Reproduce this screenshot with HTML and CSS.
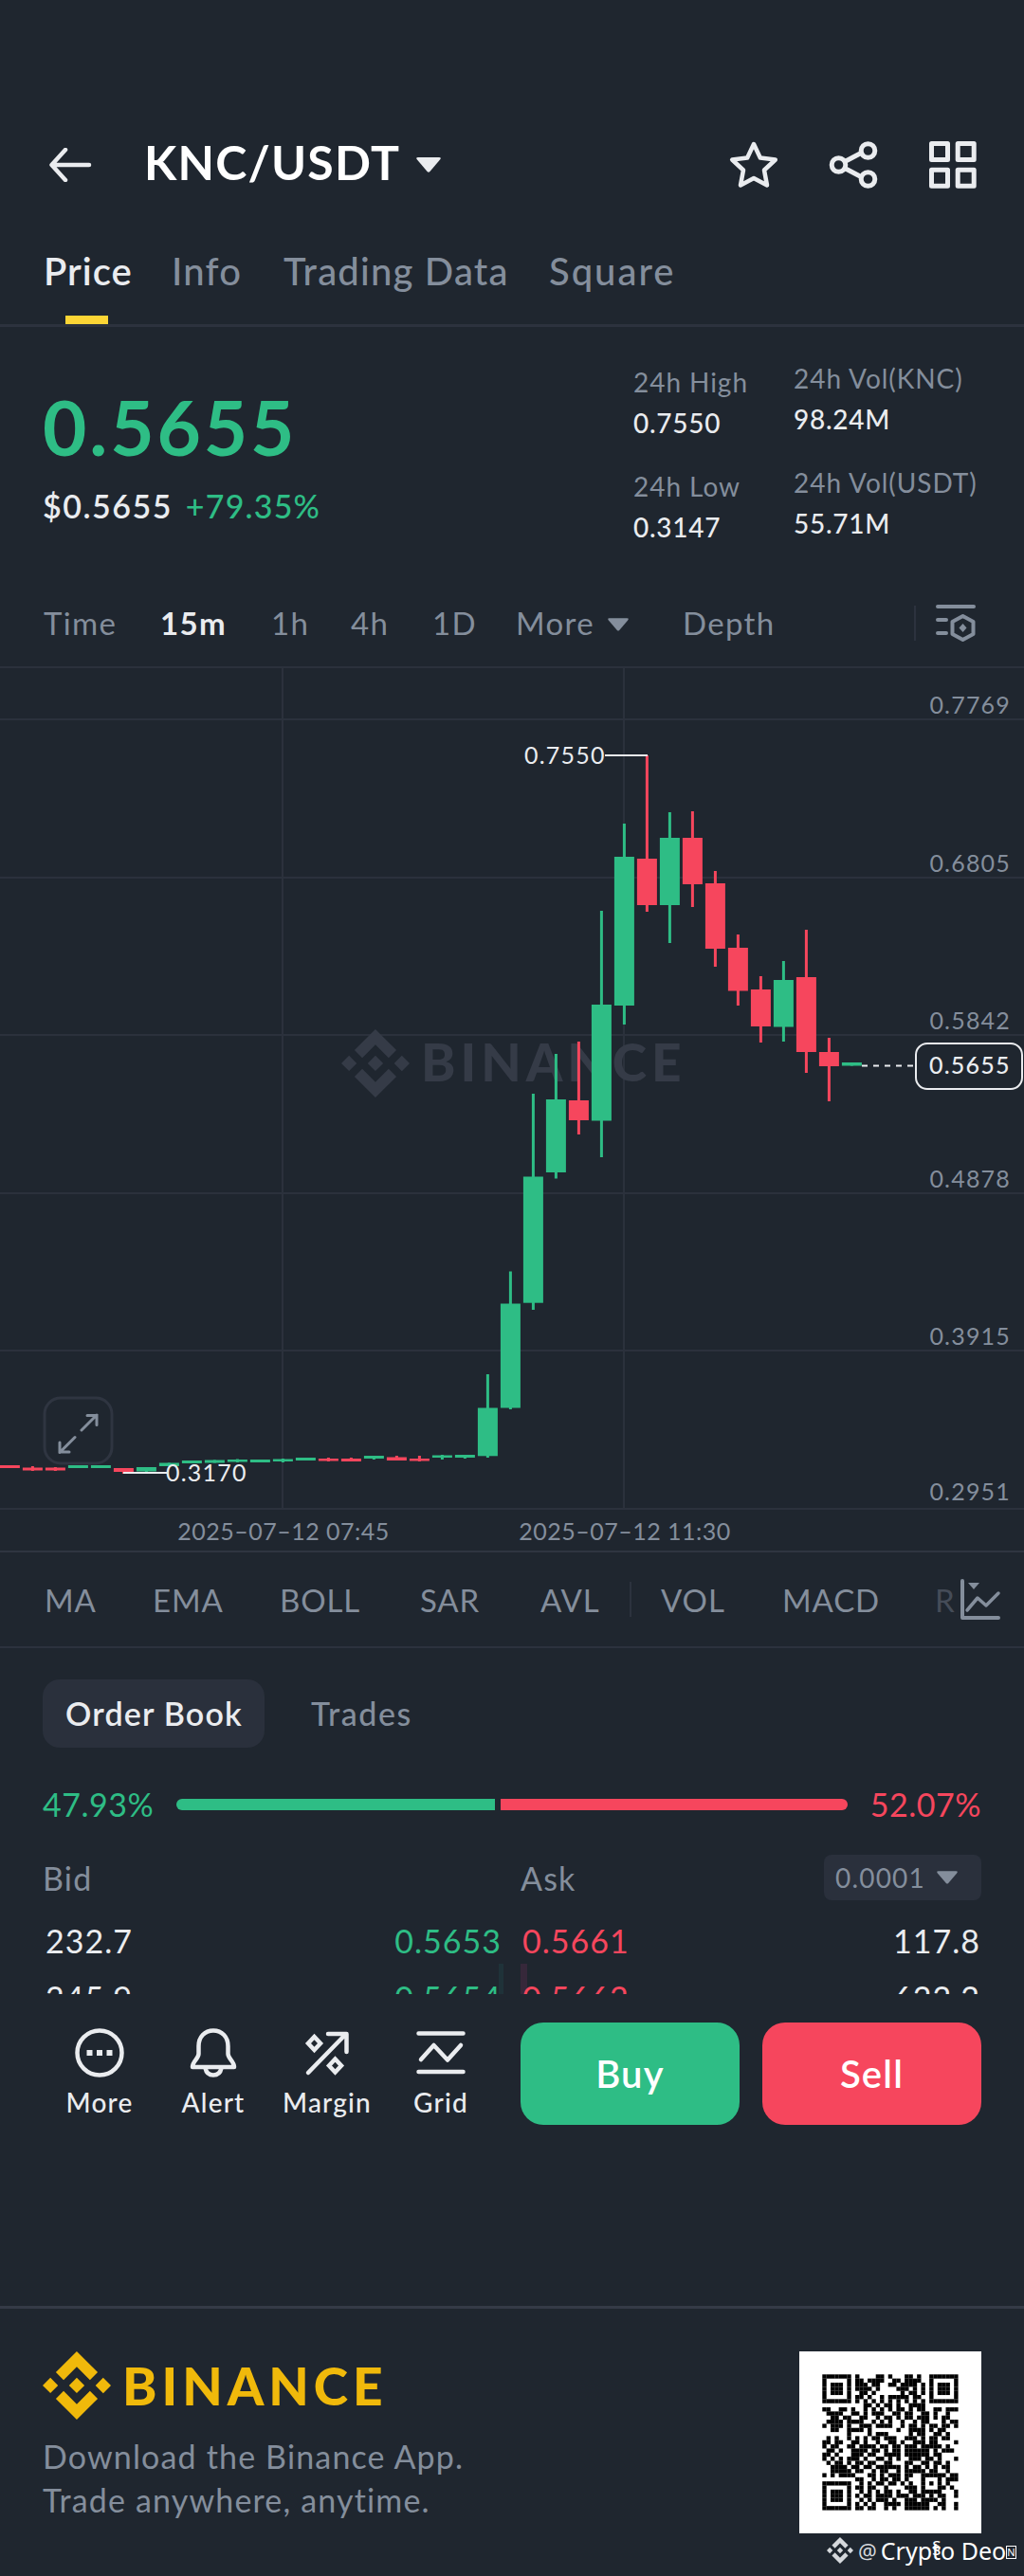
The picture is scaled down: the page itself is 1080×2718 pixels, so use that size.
FILE: index.html
```html
<!DOCTYPE html>
<html lang="en">
<head>
<meta charset="UTF-8">
<title>KNC/USDT</title>
<link rel="stylesheet" href="styles.css">
</head>
<body>

<!-- Shared logo mark -->
<svg class="defs" width="0" height="0">
    <symbol id="mark" viewBox="0 0 24 24">
        <path fill="currentColor" d="M16.624 13.9202l2.7175 2.7154-7.353 7.353-7.353-7.352 2.7175-2.7164 4.6355 4.6595 4.6356-4.6595zm4.6366-4.6366L24 12l-2.7154 2.7164L18.5682 12l2.6924-2.7164zm-9.272.001l2.7163 2.6914-2.7164 2.7174v-.001L9.2721 12l2.7164-2.7154zm-9.2722-.001L5.4088 12l-2.6914 2.6924L0 12l2.7164-2.7164zM11.9885.0115l7.353 7.329-2.7174 2.7154-4.6356-4.6356-4.6355 4.6595-2.7174-2.7154 7.353-7.353z"/>
    </symbol>
    <symbol id="caret" viewBox="0 0 26 16">
        <path fill="currentColor" d="M2 0h22q3 0 1 2.600L14.400 15q-1.400 1.600-2.800 0L1 2.600Q-1 0 2 0z"/>
    </symbol>
</svg>

<header class="header">
    <svg class="back" viewBox="0 0 46 36" fill="none" stroke="currentColor" stroke-width="4.500">
        <path d="M43 18H4M18 2L3.500 18 18 34" stroke-linecap="round" stroke-linejoin="round"/>
    </svg>
    <h1>KNC/USDT</h1>
    <svg class="header-caret"><use href="#caret"/></svg>
    <div class="header-icons">
        <svg viewBox="0 0 52 52" fill="none" stroke="currentColor" stroke-width="4.500" stroke-linejoin="round">
            <path d="M26 4l6.800 14.500 16 2-11.800 11 3 16L26 40l-14 7.500 3-16-11.800-11 16-2z"/>
        </svg>
        <svg viewBox="0 0 52 52" fill="none" stroke="currentColor" stroke-width="5">
            <circle cx="10.500" cy="26" r="7.300"/>
            <circle cx="41.500" cy="11" r="7.300"/>
            <circle cx="41.500" cy="41" r="7.300"/>
            <path d="M17 22.500l18-9.500M17 29.500l18 9.500"/>
        </svg>
        <svg viewBox="0 0 52 52" fill="none" stroke="currentColor" stroke-width="5" stroke-linejoin="round">
            <rect x="3.500" y="3.500" width="17" height="17"/>
            <rect x="31.200" y="3.500" width="17" height="17"/>
            <rect x="3.500" y="31.200" width="17" height="17"/>
            <rect x="31.200" y="31.200" width="17" height="17"/>
        </svg>
    </div>
</header>

<nav class="tabs">
    <span class="active">Price</span>
    <span>Info</span>
    <span>Trading Data</span>
    <span class="square">Square</span>
</nav>

<section class="summary">
    <div class="price">
        <div class="last">0.5655</div>
        <div class="change"><b>$0.5655</b> <span class="green">+79.35%</span></div>
    </div>
    <div class="stats">
        <div class="stat"><label>24h High</label><span>0.7550</span></div>
        <div class="stat"><label>24h Low</label><span>0.3147</span></div>
    </div>
    <div class="stats vol">
        <div class="stat"><label>24h Vol(KNC)</label><span>98.24M</span></div>
        <div class="stat"><label>24h Vol(USDT)</label><span>55.71M</span></div>
    </div>
</section>

<nav class="intervals">
    <span>Time</span>
    <span class="active">15m</span>
    <span>1h</span>
    <span>4h</span>
    <span>1D</span>
    <span>More <svg class="small-caret"><use href="#caret"/></svg></span>
    <span>Depth</span>
    <i class="divider"></i>
    <svg class="settings" viewBox="0 0 42 42" fill="none" stroke="currentColor" stroke-width="4" stroke-linecap="round" stroke-linejoin="round">
        <path d="M2 4h38M2 18h9M2 32h9"/>
        <path d="M28.500 14l11 6v13l-11 6-11-6V20z"/>
        <path d="M28.500 22l4 4.500-4 4.500-4-4.500z" fill="currentColor" stroke="none"/>
    </svg>
</nav>

<svg id="chart" class="chart" viewBox="0 703 1080 933">
    <g class="grid-lines">
        <path d="M0 704H1080M0 759H1080M0 926H1080M0 1092H1080M0 1259H1080M0 1425H1080M0 1592H1080"/>
        <path d="M298 704V1592M658 704V1592"/>
    </g>
    <g class="watermark">
        <use href="#mark" x="360" y="1086" width="72" height="72"/>
        <text x="444" y="1141">BINANCE</text>
    </g>
    <g class="expand">
        <rect x="47" y="1475" width="71" height="69" rx="17"/>
        <path d="M86 1509l16-16M92 1493.500h10v10M79 1516.500l-16 16M73 1532h-10v-10"/>
    </g>
    <g id="candles"></g>
    <g class="axis">
        <text x="1066" y="753">0.7769</text>
        <text x="1066" y="920">0.6805</text>
        <text x="1066" y="1086">0.5842</text>
        <text x="1066" y="1253">0.4878</text>
        <text x="1066" y="1419">0.3915</text>
        <text x="1066" y="1583">0.2951</text>
    </g>
    <g class="dates">
        <text x="299" y="1625">2025–07–12 07:45</text>
        <text x="659" y="1625">2025–07–12 11:30</text>
    </g>
    <g class="marks">
        <path d="M638 797H683M130 1554H176"/>
        <path class="dashed" d="M909 1124.500H965"/>
        <text x="553" y="806">0.7550</text>
        <text x="175" y="1563">0.3170</text>
        <rect x="966" y="1101" width="112" height="48" rx="12"/>
        <text class="current" x="980" y="1133">0.5655</text>
    </g>
</svg>

<nav class="indicators">
    <span>MA</span>
    <span>EMA</span>
    <span>BOLL</span>
    <span>SAR</span>
    <span>AVL</span>
    <i class="divider"></i>
    <span>VOL</span>
    <span>MACD</span>
    <span class="fade">R</span>
    <svg viewBox="0 0 44 44" fill="none" stroke="currentColor" stroke-width="4" stroke-linecap="round" stroke-linejoin="round">
        <path d="M3 2v39h38"/>
        <path d="M8 33l11-13 9 8 13-13" stroke-width="3.500"/>
        <path d="M9 4h12l-6 7z" fill="currentColor" stroke="none"/>
    </svg>
</nav>

<section class="book">
    <div class="book-tabs">
        <span class="active">Order Book</span>
        <span>Trades</span>
    </div>
    <div class="ratio">
        <span class="green">47.93%</span>
        <div class="bar"><i style="width: 336px"></i><i></i></div>
        <span class="red">52.07%</span>
    </div>
    <div class="book-head">
        <span>Bid</span>
        <span>Ask</span>
        <span class="select">0.0001 <svg class="small-caret"><use href="#caret"/></svg></span>
    </div>
    <div class="book-row">
        <span>232.7</span><span class="green bid">0.5653</span>
        <span class="red ask">0.5661</span><span>117.8</span>
    </div>
    <div class="book-row deep">
        <span>245.9</span><span class="green bid">0.5654</span>
        <span class="red ask">0.5662</span><span>622.2</span>
    </div>
</section>

<footer class="actions">
    <div class="action">
        <svg viewBox="0 0 52 52" fill="none" stroke="currentColor" stroke-width="4.500">
            <circle cx="26" cy="26" r="23.500"/>
            <path d="M12.500 26h6M23 26h6M33.500 26h6" stroke-width="6"/>
        </svg>
        More
    </div>
    <div class="action">
        <svg viewBox="0 0 52 52" fill="none" stroke="currentColor" stroke-width="4.500" stroke-linejoin="round">
            <path d="M10.500 19C10.500 9 17 2.500 26 2.500S41.500 9 41.500 19v8c0 5 6.500 8 6.500 14H4c0-6 6.500-9 6.500-14z"/>
            <path d="M17.500 42c1 5 4.500 7.500 8.500 7.500s7.500-2.500 8.500-7.500"/>
        </svg>
        Alert
    </div>
    <div class="action">
        <svg viewBox="0 0 52 52" fill="none" stroke="currentColor" stroke-width="4.500" stroke-linejoin="round" stroke-linecap="round">
            <path d="M6 47L45 7M27 6h19.500v19"/>
            <path d="M12.500 9l6.500 7-6.500 7-6.500-7zM34.500 32.500l6.500 7-6.500 7-6.500-7z" stroke-linejoin="miter"/>
        </svg>
        Margin
    </div>
    <div class="action">
        <svg viewBox="0 0 52 52" fill="none" stroke="currentColor" stroke-width="4.500" stroke-linejoin="round" stroke-linecap="round">
            <path d="M2.500 5.500h47M2.500 46h47M5 33l13.500-15L33 33.500 47 18"/>
        </svg>
        Grid
    </div>
    <button class="buy">Buy</button>
    <button class="sell">Sell</button>
</footer>

<section class="promo">
    <div>
        <div class="brand"><svg><use href="#mark"/></svg>BINANCE</div>
        <p>Download the Binance App.<br>Trade anywhere, anytime.</p>
    </div>
    <svg id="qr" class="qr" viewBox="0 0 192 192"></svg>
    <div class="author"><svg><use href="#mark"/></svg><span class="at">@</span>Cryp<span class="clash">t<i>§</i></span>o Deo<small>N</small></div>
</section>

<script>
const SVG = 'http://www.w3.org/2000/svg';
const GREEN = '#2ebd85';
const RED = '#f6465d';

function rect(parent, x, y, w, h, fill) {
    const r = document.createElementNS(SVG, 'rect');
    r.setAttribute('x', x);
    r.setAttribute('y', y);
    r.setAttribute('width', w);
    r.setAttribute('height', h);
    r.setAttribute('fill', fill);
    parent.appendChild(r);
}

// colour, wick top, body top, body bottom, wick bottom; one candle every 24px
const candles = [
    [RED, 1546, 1546, 1549, 1549],
    [RED, 1547, 1548.5, 1551.5, 1552],
    [RED, 1548, 1548.5, 1551.5, 1552],
    [GREEN, 1546, 1546, 1549, 1549],
    [GREEN, 1546, 1546, 1549, 1549],
    [RED, 1549, 1549, 1553, 1555],
    [GREEN, 1548, 1548, 1552.5, 1553],
    [GREEN, 1543.5, 1543.5, 1547, 1547],
    [GREEN, 1541, 1541, 1544, 1544],
    [GREEN, 1540.5, 1540.5, 1543.5, 1543.5],
    [GREEN, 1539.5, 1540, 1542.5, 1543],
    [GREEN, 1540, 1540, 1543, 1543],
    [GREEN, 1539, 1539.5, 1542, 1543],
    [GREEN, 1538, 1538, 1541, 1541],
    [RED, 1538, 1539, 1541.5, 1542],
    [RED, 1538, 1539, 1542, 1542],
    [GREEN, 1536, 1536, 1539, 1540],
    [RED, 1536, 1537.5, 1541, 1541],
    [RED, 1536, 1539, 1541.5, 1542],
    [GREEN, 1535, 1535.5, 1538, 1540],
    [GREEN, 1535, 1535, 1538, 1539],
    [GREEN, 1450, 1485.5, 1536.3, 1538],
    [GREEN, 1341.5, 1375.5, 1485.5, 1487],
    [GREEN, 1154, 1241.5, 1374.7, 1382],
    [GREEN, 1112, 1160, 1237, 1243.5],
    [RED, 1099, 1161, 1182, 1197],
    [GREEN, 961, 1060, 1182.5, 1221],
    [GREEN, 869, 904, 1061, 1081],
    [RED, 797, 906, 955, 962],
    [GREEN, 857, 884, 955, 995],
    [RED, 856, 884, 933, 957],
    [RED, 919, 932, 1001, 1020],
    [RED, 986, 1000, 1045.5, 1061],
    [RED, 1030, 1044, 1083, 1100],
    [GREEN, 1014, 1034, 1083.5, 1099],
    [RED, 981, 1031, 1110, 1132],
    [RED, 1095, 1110, 1125, 1162],
    [GREEN, 1121, 1121, 1124.5, 1124.5]
];

const candleGroup = document.getElementById('candles');
candles.forEach(function([color, high, top, bottom, low], i) {
    const x = 10.4 + i * 24;
    rect(candleGroup, x - 1.5, high, 3, low - high, color);
    rect(candleGroup, x - 10.5, top, 21, bottom - top, color);
});

const qrRows = [
    '#######.#....##.#...##.#..#######',
    '#.....#.##.####..##.####..#.....#',
    '#.###.#.###.##..##.####.#.#.###.#',
    '#.###.#.####.#....###.#.#.#.###.#',
    '#.###.#..##.#......#.##.#.#.###.#',
    '#.....#.##.#..#.#####.##..#.....#',
    '#######.#.#.#.#.#.#.#.#.#.#######',
    '..........##.#.##.#..####........',
    '##..##.#..#.#.#.#.##.#.##..##.###',
    '.####..##.#.###..##.##..##.#..#..',
    '..##.##..##..#.##.#.##.###.#.##..',
    '.####.####..#.#.#..#..#.##...#.##',
    '#.###.#..###.####..#.##.#.##.##.#',
    '..##..####.#......#..####.#.##...',
    '......#....#.###.....#.##..##.#..',
    '.#.#..#.#.#.##.###..###.#.##.##..',
    '##.##..##.#..#..##.#..###.##....#',
    '#.##..##.####.##.##.###.#####.#..',
    '.##.#..####.##.#.##.######.#.###.',
    '##.#...###.##..####.######.##....',
    '#.#.#.###.#..##.#.#..###.##.#...#',
    '.#.##.#.##.##..##...##..##.##.#..',
    '..####.##.##.######.#.##.#.#.##..',
    '..#####.##..#.##..#.#####.##..#..',
    '#.#.####...##.#.###.##..######.##',
    '........##..#.##.##.#...#...#.###',
    '#######..#.#.##.##.#.#..#.#.#.#..',
    '#.....#.##.##..#....###.#...##.#.',
    '#.###.#..#.#.#.##.#..##.#####...#',
    '#.###.#.#.##.####.###.###.#.##..#',
    '#.###.#..#.#.###.#..###.####.#...',
    '#.....#.#.#.#..####.######..##..#',
    '#######.##.##..#.#..######.#.#..#'
];

const qr = document.getElementById('qr');
rect(qr, 0, 0, 192, 192, '#fff');
qrRows.forEach(function(row, y) {
    for (let x = 0; x < row.length; x++) {
        if (row[x] === '#') {
            rect(qr, 24.3 + x * 4.34, 24.3 + y * 4.34, 4.4, 4.4, '#000');
        }
    }
});
</script>

</body>
</html>
```
FILE: styles.css
```css
* {
    box-sizing: border-box;
}
body {
    margin: 0;
    width: 1080px;
    background: #1f262f;
    color: #eaecef;
    font-family: Lato, "Open Sans", sans-serif;
    font-size: 34px;
    letter-spacing: 0.035em;
}
svg {
    display: block;
}
.defs {
    position: absolute;
}
.green {
    color: #2ebd85;
}
.red {
    color: #f6465d;
}

/* Header */
.header {
    display: flex;
    align-items: center;
    height: 214px;
    padding: 134px 49px 0 51px;
}
.back {
    width: 46px;
    height: 36px;
}
h1 {
    margin: 0 17px 6px 55px;
    font-size: 50px;
    font-weight: 700;
    letter-spacing: 0.024em;
    color: #fff;
}
.header-caret {
    width: 26px;
    height: 16px;
}
.header-icons {
    display: flex;
    gap: 53px;
    margin-left: auto;
}
.header-icons svg {
    width: 52px;
    height: 52px;
}

/* Page tabs */
.tabs {
    display: grid;
    grid-template-columns: 135px 118px 280px 1fr;
    height: 131px;
    padding: 48px 0 0 46px;
    border-bottom: 3px solid #2c323e;
    font-size: 40px;
    line-height: 48px;
    font-weight: 500;
    color: #848e9c;
}
.tabs .active {
    position: relative;
    color: #eaecef;
    font-weight: 600;
    letter-spacing: 0.025em;
}
.tabs .active::after {
    content: "";
    position: absolute;
    left: 23px;
    bottom: 0;
    width: 45px;
    height: 9px;
    background: #fcd535;
}
.tabs .square {
    letter-spacing: 0.05em;
}

/* Price summary */
.summary {
    display: grid;
    grid-template-columns: 623px 169px 1fr;
    height: 268px;
    padding-left: 45px;
}
.price {
    padding-top: 57px;
}
.last {
    font-size: 80px;
    font-weight: 700;
    line-height: 96px;
    letter-spacing: 0.036em;
    color: #2ebd85;
}
.change {
    margin-top: 15px;
    line-height: 41px;
    font-weight: 500;
    word-spacing: 4px;
}
.change b {
    font-weight: 600;
    letter-spacing: 0.045em;
}
.stats {
    padding-top: 41px;
    font-size: 28px;
    line-height: 34px;
}
.stats.vol {
    padding-top: 37px;
}
.stat {
    display: flex;
    flex-direction: column;
    gap: 9px;
    margin-bottom: 33px;
}
.stat label {
    color: #848e9c;
    letter-spacing: 0.034em;
}
.stat span {
    font-weight: 500;
    letter-spacing: 0.027em;
}

/* Chart intervals */
.intervals,
.indicators {
    display: grid;
    align-items: center;
    font-size: 33px;
    color: #848e9c;
}
.intervals {
    grid-template-columns: 123px 117px 84px 86px 88px 176px 244px 23px 42px;
    height: 90px;
    padding: 0 0 2px 46px;
    letter-spacing: 0.04em;
}
.intervals .active {
    color: #eaecef;
    font-weight: 700;
}
.small-caret {
    display: inline-block;
    width: 22px;
    height: 14px;
    margin-left: 4px;
    vertical-align: 4px;
}
.divider {
    width: 2px;
    height: 37px;
    background: #2c323e;
}
.settings {
    width: 42px;
    height: 42px;
}

/* Chart */
.chart {
    width: 1080px;
    height: 933px;
}
.grid-lines path {
    stroke: #2b313c;
    stroke-width: 2;
}
.chart text {
    font-size: 25px;
    letter-spacing: 0.048em;
}
.chart .watermark {
    color: #353b47;
}
.chart .watermark text {
    fill: #353b47;
    font-size: 55px;
    font-weight: 900;
    letter-spacing: 5px;
}
.expand {
    fill: none;
    stroke: #848e9c;
    stroke-width: 3;
    stroke-linecap: round;
}
.expand rect {
    stroke: #2f3541;
}
.axis text {
    fill: #848e9c;
    text-anchor: end;
}
.chart .dates text {
    fill: #848e9c;
    text-anchor: middle;
    letter-spacing: 0.02em;
}
.marks text {
    fill: #eaecef;
}
.marks .current {
    font-weight: 500;
}
.marks path,
.marks rect {
    fill: none;
    stroke: #eaecef;
    stroke-width: 2;
}
.marks .dashed {
    stroke-dasharray: 6 6;
}

/* Indicators */
.indicators {
    grid-template-columns: 114px 134px 148px 127px 94px 33px 128px 161px 26px 44px;
    height: 103px;
    padding-left: 47px;
    border-top: 2px solid #2f3541;
    border-bottom: 2px solid #2c323e;
    letter-spacing: 0.027em;
}
.indicators .fade {
    color: #454c58;
}
.indicators svg {
    width: 44px;
    height: 44px;
}

/* Order book */
.book {
    height: 365px;
    padding: 33px 45px 0;
    overflow: hidden;
}
.book-tabs {
    display: flex;
    gap: 25px;
    line-height: 72px;
    color: #848e9c;
    font-weight: 500;
    letter-spacing: 0.045em;
}
.book-tabs span {
    padding: 0 24px;
}
.book-tabs .active {
    width: 234px;
    padding-right: 0;
    border-radius: 18px;
    background: #2a303c;
    color: #eaecef;
    font-weight: 600;
    letter-spacing: 0.035em;
}
.ratio {
    display: flex;
    align-items: center;
    justify-content: space-between;
    margin-top: 40px;
    height: 40px;
    letter-spacing: 0.015em;
}
.ratio span {
    margin-bottom: 2px;
}
.bar {
    display: flex;
    gap: 6px;
    width: 708px;
    height: 12px;
}
.bar i {
    background: #2ebd85;
    border-radius: 6px 0 0 6px;
}
.bar i:last-child {
    flex: 1;
    background: #f6465d;
    border-radius: 0 6px 6px 0;
}
.book-head {
    display: grid;
    grid-template-columns: 504px 1fr 166px;
    align-items: center;
    margin-top: 33px;
    height: 48px;
    color: #848e9c;
}
.select {
    padding-left: 12px;
    border-radius: 8px;
    background: #2a303c;
    font-size: 28px;
    line-height: 48px;
    white-space: nowrap;
}
.book-row {
    display: grid;
    grid-template-columns: 243px 261px 243px 243px;
    height: 60px;
    line-height: 71px;
    letter-spacing: 0.03em;
}
.book-head + .book-row {
    margin-top: 7px;
}
.book-row span:first-child {
    padding-left: 3px;
}
.book-row span:last-child {
    padding-right: 1px;
    text-align: right;
}
.book-row .bid {
    padding-right: 20px;
    text-align: right;
}
.book-row .ask {
    padding-left: 2px;
}
.deep .bid {
    background: linear-gradient(#1f3239, #1f3239) 238px 0 / 5px 60px no-repeat;
}
.deep .ask {
    background: linear-gradient(#36283a, #36283a) 0 0 / 7px 60px no-repeat;
}

/* Bottom actions */
.actions {
    display: grid;
    grid-template-columns: repeat(4, 120px) 231px 231px;
    height: 329px;
    padding: 30px 45px 0;
}
.action {
    display: flex;
    flex-direction: column;
    align-items: center;
    gap: 9px;
    padding-top: 6px;
    font-size: 28px;
    line-height: 34px;
    font-weight: 500;
}
.action svg {
    width: 52px;
    height: 52px;
}
button {
    height: 108px;
    margin: 0 -24px 0 24px;
    border: 0;
    border-radius: 24px;
    color: #fff;
    font: 600 40px Lato, sans-serif;
    letter-spacing: 0.03em;
}
.buy {
    background: #2ebd85;
}
.sell {
    margin: 0 -48px 0 48px;
    background: #f6465d;
}

/* Download banner */
.promo {
    position: relative;
    display: flex;
    justify-content: space-between;
    height: 285px;
    padding: 45px 45px 0;
    border-top: 3px solid #343a46;
}
.brand {
    display: flex;
    align-items: center;
    gap: 12px;
    height: 72px;
    font-size: 55px;
    font-weight: 900;
    letter-spacing: 5px;
    color: #f0b90b;
}
.brand svg {
    width: 72px;
    height: 72px;
}
.promo p {
    margin: 16px 0 0;
    line-height: 46px;
    letter-spacing: 0.034em;
    color: #848e9c;
}
.qr {
    width: 192px;
    height: 192px;
}
.author {
    position: absolute;
    left: 872px;
    bottom: 10px;
    display: flex;
    align-items: center;
    height: 34px;
    font: 25px "Noto Sans", sans-serif;
    letter-spacing: 0;
    white-space: pre;
    color: #fff;
}
.author svg {
    width: 28px;
    height: 28px;
    margin-right: 5px;
    color: #d5d8dc;
}
.at {
    margin-right: 4px;
    font-size: 22px;
    color: #d5d8dc;
}
.clash {
    position: relative;
}
.clash i {
    position: absolute;
    left: 0;
    top: 2px;
    font-size: 19px;
    font-style: normal;
}
.author small {
    margin-top: 4px;
    border: 1px solid #fff;
    font-size: 11px;
    line-height: 12px;
}
```
